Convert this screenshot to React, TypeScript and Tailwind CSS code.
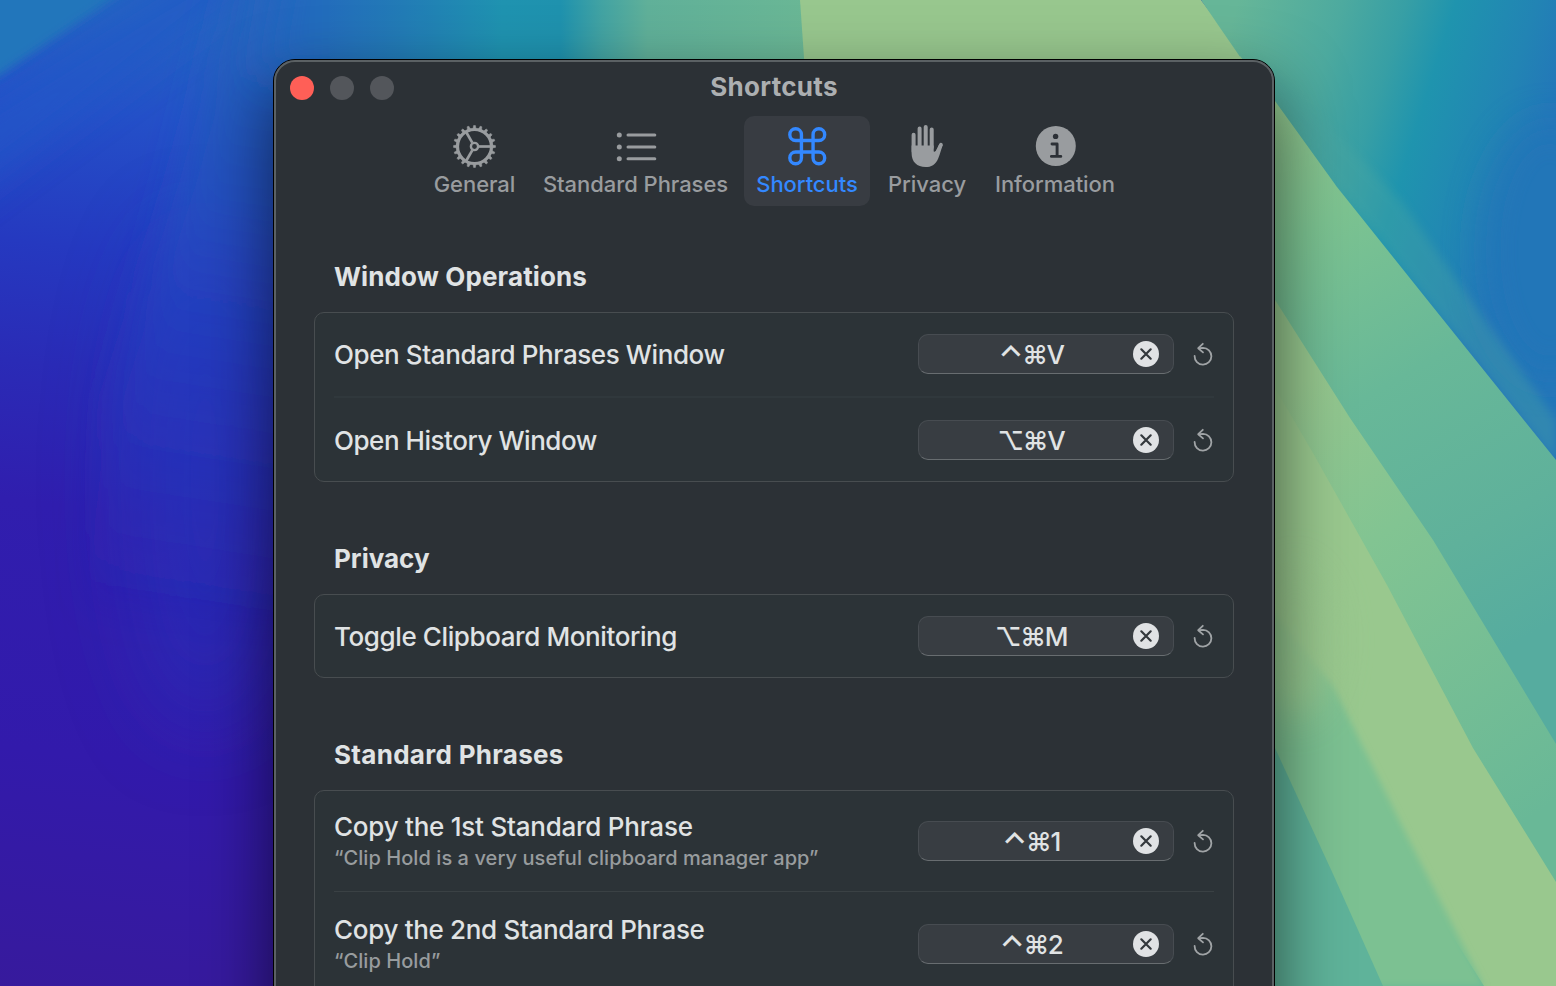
import React from "react";
import { Command } from "lucide-react";

const GREY = "#999c9f";

function Wallpaper() {
  return (
    <svg className="absolute inset-0" width="1556" height="986" viewBox="0 0 1556 986" aria-hidden="true">
      <defs>
        <linearGradient id="left" gradientUnits="userSpaceOnUse" x1="0" y1="0" x2="-120" y2="980">
          <stop offset="0" stopColor="#2462c2" />
          <stop offset="0.1" stopColor="#2450c8" />
          <stop offset="0.24" stopColor="#2539c0" />
          <stop offset="0.36" stopColor="#2a2bb6" />
          <stop offset="0.5" stopColor="#301eae" />
          <stop offset="0.75" stopColor="#321aab" />
          <stop offset="1" stopColor="#371a9c" />
        </linearGradient>
        <linearGradient id="beam" gradientUnits="userSpaceOnUse" x1="300" y1="0" x2="200" y2="640">
          <stop offset="0" stopColor="#2566bd" stopOpacity="0.8" />
          <stop offset="0.3" stopColor="#2456bf" stopOpacity="0.7" />
          <stop offset="0.55" stopColor="#2442c2" stopOpacity="0.5" />
          <stop offset="1" stopColor="#2630b8" stopOpacity="0" />
        </linearGradient>
        <linearGradient id="top" gradientUnits="userSpaceOnUse" x1="230" y1="0" x2="810" y2="0">
          <stop offset="0" stopColor="#2462c2" />
          <stop offset="0.12" stopColor="#2468be" />
          <stop offset="0.3" stopColor="#227cb6" />
          <stop offset="0.47" stopColor="#1f93b0" />
          <stop offset="0.57" stopColor="#1f92ae" />
          <stop offset="0.64" stopColor="#42a3a3" />
          <stop offset="0.72" stopColor="#60b099" />
          <stop offset="1" stopColor="#6ab795" />
        </linearGradient>
        <linearGradient id="band" gradientUnits="userSpaceOnUse" x1="1270" y1="120" x2="1556" y2="620">
          <stop offset="0" stopColor="#8fc68e" />
          <stop offset="0.2" stopColor="#7cc391" />
          <stop offset="0.5" stopColor="#68b898" />
          <stop offset="0.8" stopColor="#5fb19b" />
          <stop offset="1" stopColor="#56ac9f" />
        </linearGradient>
        <linearGradient id="sky" gradientUnits="userSpaceOnUse" x1="1220" y1="60" x2="1540" y2="160">
          <stop offset="0" stopColor="#66b698" />
          <stop offset="0.3" stopColor="#4daa9f" />
          <stop offset="0.48" stopColor="#379fa5" />
          <stop offset="0.62" stopColor="#1f94ae" />
          <stop offset="0.85" stopColor="#2284b4" />
          <stop offset="1" stopColor="#2376b9" />
        </linearGradient>
        <linearGradient id="mid" gradientUnits="userSpaceOnUse" x1="1275" y1="400" x2="1556" y2="800">
          <stop offset="0" stopColor="#96c78e" />
          <stop offset="0.35" stopColor="#82c492" />
          <stop offset="1" stopColor="#69b897" />
        </linearGradient>
        <filter id="b2" x="-20%" y="-20%" width="140%" height="140%"><feGaussianBlur stdDeviation="3" /></filter>
        <filter id="b4" x="-20%" y="-20%" width="140%" height="140%"><feGaussianBlur stdDeviation="5" /></filter>
        <filter id="b18" x="-50%" y="-50%" width="200%" height="200%"><feGaussianBlur stdDeviation="18" /></filter>
        <filter id="b40" x="-100%" y="-50%" width="300%" height="200%"><feGaussianBlur stdDeviation="45" /></filter>
      </defs>
      <rect width="800" height="986" fill="url(#left)" />
      <ellipse cx="205" cy="480" rx="70" ry="250" fill="#2338bb" opacity="0.5" filter="url(#b40)" />
      <polygon points="-60,130 225,-50 280,-30 -60,220" fill="#2458c8" opacity="0.6" filter="url(#b18)" />
      <polygon points="-20,-20 140,-20 0,75 -20,85" fill="#2476bb" filter="url(#b4)" />
      <polygon points="245,-60 420,-60 420,640 80,640 110,400 180,180" fill="url(#beam)" filter="url(#b18)" />
      <polygon points="285,-50 850,-50 850,75 262,75" fill="url(#top)" filter="url(#b18)" />
      <rect x="330" width="475" height="100" fill="url(#top)" />
      <polygon points="800,0 1201,0 1300,130 809,130" fill="#98c78e" />
      <polygon points="1201,0 1556,0 1556,470 1275,108" fill="url(#sky)" />
      <ellipse cx="1550" cy="250" rx="70" ry="130" fill="#2376b8" opacity="0.8" filter="url(#b18)" />
      <polygon points="1245,58 1275,70 1400,200 1556,420 1556,462 1275,108" fill="#4ba7a2" opacity="0.35" filter="url(#b4)" />
      <polygon points="1275,101 1337,187 1433,307 1556,460 1556,986 1240,986 1240,56" fill="url(#band)" />
      <polygon points="1277,303 1350,418 1433,540 1556,744 1556,986 1240,986 1240,250" fill="url(#mid)" />
      <polygon points="1275,388 1313,453 1387,585 1473,748 1556,882 1556,986 1484,986 1240,600" fill="#99c88e" />
      <polygon points="1230,560 1333,686 1407,836 1484,986 1240,986" fill="#7cc192" filter="url(#b2)" />
      <ellipse cx="1295" cy="640" rx="40" ry="80" fill="#99c88e" opacity="0.85" filter="url(#b18)" />
      <polygon points="1275,748 1333,874 1383,986 1240,986 1240,680" fill="#5fb39a" />
    </svg>
  );
}

function GearIcon() {
  const teeth = Array.from({ length: 20 }, (_, i) => i * 18);
  return (
    <svg width="44" height="44" viewBox="-21.5 -22.5 44 44" fill="none" stroke={GREY}>
      <circle r="17" strokeWidth="3.2" />
      <circle r="3.6" strokeWidth="2.4" />
      {teeth.map((a) => (
        <path key={a} d="M18 -1.5 L21 -0.9 V0.9 L18 1.5 Z" fill={GREY} strokeWidth="0.5" transform={`rotate(${a})`} />
      ))}
      {[0, 120, 240].map((a) => (
        <path key={a} d="M4.5 0 H16.5" strokeWidth="2.7" transform={`rotate(${a})`} />
      ))}
    </svg>
  );
}

function ListIcon() {
  return (
    <svg width="44" height="44" viewBox="-0.8 -0.6 44 44" stroke={GREY} fill={GREY} strokeLinecap="round">
      {[10.5, 22.3, 34.2].map((y) => (
        <g key={y}>
          <circle cx="4.5" cy={y} r="2.5" stroke="none" />
          <path d={`M13.2 ${y} H40`} strokeWidth="3" />
        </g>
      ))}
    </svg>
  );
}

function HandIcon() {
  return (
    <svg width="44" height="44" viewBox="0 0.4 44 44" fill="none" stroke={GREY} strokeLinecap="round" strokeLinejoin="round">
      <path d="M8.6 11.2 V28 M14.6 5 V24 M20.7 3.4 V24 M26.7 6 V24" strokeWidth="4" />
      <path d="M36 21 L31 31" strokeWidth="3.6" />
      <path
        d="M6.6 22 H28.7 V28 C30.2 28.6 31.6 26.8 32.6 24.6 L34.3 20.4 L37.7 21.4 C36.2 25.5 35.2 30.4 33.2 34.8 C30.5 41 26.2 43.4 20.6 43.4 C12 43.4 6.6 38.2 6.6 29.6 Z"
        fill={GREY}
        stroke="none"
      />
    </svg>
  );
}

function InfoIcon() {
  return (
    <svg width="44" height="44" viewBox="-0.8 0 44 44" fill="none">
      <circle cx="22" cy="22" r="20" fill={GREY} />
      <circle cx="21.8" cy="12.4" r="2.7" fill="#2c3036" />
      <path d="M18.2 20 H23.3 V32 M17.6 32.4 H27" stroke="#2c3036" strokeWidth="2.9" strokeLinecap="round" strokeLinejoin="round" />
    </svg>
  );
}

function ResetIcon() {
  return (
    <svg width="20" height="24" viewBox="0 0 20 24" fill="none" stroke="#a0a4a6" strokeWidth="1.8" strokeLinecap="round" strokeLinejoin="round">
      <path d="M1.6 14 A8.4 8.4 0 1 0 10 5.8 L5.8 6.2" />
      <path d="M9.8 1.8 L5.2 6.2 L10 10.4" />
    </svg>
  );
}

function ClearIcon() {
  return (
    <svg width="26" height="26" viewBox="0 0 26 26">
      <circle cx="13" cy="13" r="13" fill="#e0e2e4" />
      <path d="M8.3 8.3 L17.7 17.7 M17.7 8.3 L8.3 17.7" stroke="#33383c" strokeWidth="2.2" strokeLinecap="round" />
    </svg>
  );
}

type TabProps = { label: string; width: string; active?: boolean; children: React.ReactNode };

function Tab({ label, width, active, children }: TabProps) {
  return (
    <div className={`flex h-[90px] flex-col items-center rounded-[10px] pt-[8px] ${width} ${active ? "bg-[#383c42] text-[#3388ff]" : "text-[#999c9f]"}`}>
      <div className="flex h-[44px] items-center justify-center">{children}</div>
      <div className="mt-[2px] text-[22px] font-[450] leading-[28px] tracking-[-0.06px] whitespace-nowrap">{label}</div>
    </div>
  );
}

type RowProps = { title: string; note?: string; keys: string; height: string; tracking: string };

function Row({ title, note, keys, height, tracking }: RowProps) {
  const control = keys.startsWith("⌃");
  return (
    <div className={`flex items-center ${height}`}>
      <div className={`flex-1 ${note ? "" : "pt-[2px]"}`}>
        <div className={`text-[26px] font-[450] leading-[32px] whitespace-nowrap text-[#e0e3e4] ${tracking}`}>{title}</div>
        {note && <div className="mt-[2px] text-[20px] font-[450] leading-[26px] tracking-[0.06px] whitespace-nowrap text-[#989c9e]">{note}</div>}
      </div>
      <div className="flex h-[40px] w-[256px] items-center rounded-[10px] border border-[#474c51] border-b-[#686d70] bg-[#383d42] pr-[14px]">
        <div className="h-[38px] flex-1 pl-[10px] text-center text-[26px] font-[480] leading-[40px] tracking-[-1.3px] text-[#e0e3e4]">
          {control ? <><span className="align-[-5px] text-[32px] leading-none">⌃</span>{keys.slice(1)}</> : keys}
        </div>
        <ClearIcon />
      </div>
      <div className="ml-[18px] flex w-[22px] justify-center"><ResetIcon /></div>
    </div>
  );
}

function Heading({ children, className }: { children: React.ReactNode; className: string }) {
  return <h2 className={`pl-[20px] text-[26px] font-bold leading-[32px] text-[#e0e3e4] ${className}`}>{children}</h2>;
}

const card = "mt-[19px] rounded-[10px] border border-[#484d50] bg-[#2c3337] px-[19px]";

export default function App() {
  return (
    <div className="relative h-[986px] w-[1556px] overflow-hidden bg-[#311cae] font-['Inter','Liberation_Sans',sans-serif]">
      <Wallpaper />
      <main className="relative ml-[273px] mt-[59px] h-[1100px] w-[1002px] rounded-[22px] border border-black bg-[#2c3136] shadow-[0_30px_70px_rgba(0,0,0,0.6)]">
        <div className="h-full rounded-[21px] border-2 border-[#5b6164] px-[38px]">
          <header className="-mx-[24px] mb-[2px] flex h-[52px] items-center">
            <div className="flex w-[104px] gap-4">
              <span className="size-[24px] rounded-full bg-[#ff5f57]" />
              <span className="size-[24px] rounded-full bg-[#53565b]" />
              <span className="size-[24px] rounded-full bg-[#53565b]" />
            </div>
            <h1 className="flex-1 pb-[2px] pr-[104px] text-center text-[26px] font-bold leading-[32px] tracking-[0.3px] text-[#acafb1]">Shortcuts</h1>
          </header>
          <nav className="flex justify-center gap-1">
            <Tab label="General" width="w-[105px]"><GearIcon /></Tab>
            <Tab label="Standard Phrases" width="w-[209px]"><ListIcon /></Tab>
            <Tab label="Shortcuts" width="w-[126px]" active><Command size={46.5} strokeWidth={1.75} /></Tab>
            <Tab label="Privacy" width="w-[106px]"><HandIcon /></Tab>
            <Tab label="Information" width="w-[142px]"><InfoIcon /></Tab>
          </nav>
          <Heading className="mt-[55px] tracking-[0.12px]">Window Operations</Heading>
          <section className={card}>
            <Row title="Open Standard Phrases Window" keys="⌃⌘V" height="h-[82px]" tracking="tracking-[-0.4px]" />
            <hr className="my-px border-t-2 border-[#30383c]" />
            <Row title="Open History Window" keys="⌥⌘V" height="h-[82px]" tracking="tracking-[-0.46px]" />
          </section>
          <Heading className="mt-[61px]">Privacy</Heading>
          <section className={card}>
            <Row title="Toggle Clipboard Monitoring" keys="⌥⌘M" height="h-[82px]" tracking="tracking-[-0.4px]" />
          </section>
          <Heading className="mt-[61px] tracking-[0.3px]">Standard Phrases</Heading>
          <section className={card}>
            <Row title="Copy the 1st Standard Phrase" note="“Clip Hold is a very useful clipboard manager app”" keys="⌃⌘1" height="h-[100px]" tracking="tracking-[-0.24px]" />
            <hr className="border-t border-[#3a4144]" />
            <Row title="Copy the 2nd Standard Phrase" note="“Clip Hold”" keys="⌃⌘2" height="h-[103px]" tracking="tracking-[-0.32px]" />
          </section>
        </div>
      </main>
    </div>
  );
}
